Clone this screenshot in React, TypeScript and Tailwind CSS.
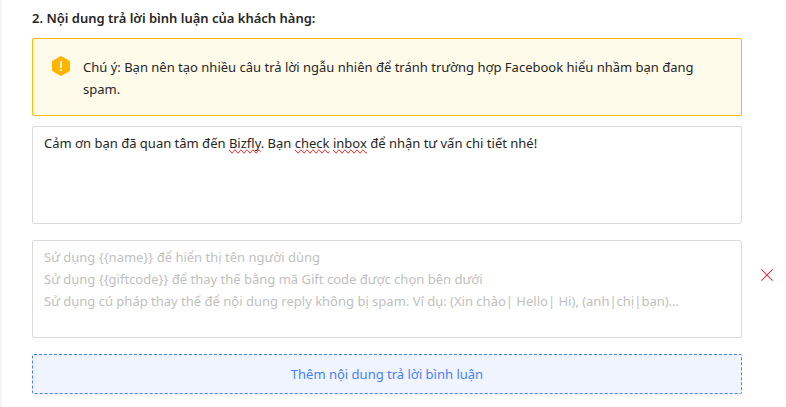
import { useState } from 'react'
import type { FC } from 'react'

interface ReplyFieldProps {
    id: string;
    label: string;
    value: string;
    misspelled?: string[];
    placeholder?: string;
    onChange: (value: string) => void;
    onRemove?: () => void;
}

const fieldText = "col-start-1 row-start-1 px-[11px] py-[5px] text-[13px] leading-[22px]";

const WarningIcon = () => (
    <svg viewBox="0 0 18 20" className="h-5 w-[18px] shrink-0" aria-hidden="true">
        <path
            d="M8 .4a2 2 0 0 1 2 0l7 4a2 2 0 0 1 1 1.7v7.8a2 2 0 0 1-1 1.7l-7 4a2 2 0 0 1-2 0l-7-4a2 2 0 0 1-1-1.7V6.1a2 2 0 0 1 1-1.7z"
            fill="#ffb400"
        />
        <path d="M9 5v7M9 13.2v1.8" stroke="#fff3cf" strokeWidth="2" />
    </svg>
)

const ReplyField: FC<ReplyFieldProps> = ({ id, label, value, misspelled = [], placeholder, onChange, onRemove }) => {
    const parts = misspelled.length > 0 ? value.split(new RegExp(`(${misspelled.join('|')})`)) : [];

    return (
        <div className="flex items-center">
            <div className="grid h-[98px] min-w-0 flex-1 rounded-xs border border-[#d9d9d9] bg-white">
                {/* Spelling marks, drawn under the transparent textarea */}
                {parts.length > 0 && (
                    <div aria-hidden="true" className={`${fieldText} whitespace-pre-wrap text-transparent`}>
                        {parts.map((part, index) => (
                            <span
                                key={index}
                                className={misspelled.includes(part) ? '[text-decoration-line:spelling-error]' : ''}
                            >
                                {part}
                            </span>
                        ))}
                    </div>
                )}
                <textarea
                    id={id}
                    aria-label={label}
                    value={value}
                    placeholder={placeholder}
                    spellCheck={false}
                    onChange={(e) => onChange(e.target.value)}
                    className={`${fieldText} resize-none bg-transparent text-[#262626] outline-none placeholder:text-[#bfbfbf]`}
                />
            </div>
            <div className="flex w-11 shrink-0 justify-center pl-1.5">
                {onRemove && (
                    <button type="button" aria-label="Xóa nội dung" onClick={onRemove} className="-mt-7 cursor-pointer p-1">
                        <svg viewBox="0 0 12 12" className="size-3" aria-hidden="true">
                            <path d="M.4.4l11.2 11.2M11.6.4L.4 11.6" stroke="#dc3545" strokeWidth="1.1" />
                        </svg>
                    </button>
                )}
            </div>
        </div>
    );
}

const App = () => {
    const [firstReply, setFirstReply] = useState('Cảm ơn bạn đã quan tâm đến Bizfly. Bạn check inbox để nhận tư vấn chi tiết nhé!');
    const [replies, setReplies] = useState<string[]>(['']);

    const updateReply = (index: number, value: string) => {
        setReplies(replies.map((reply, i) => (i === index ? value : reply)));
    }

    const placeholder = [
        'Sử dụng {{name}} để hiển thị tên người dùng',
        'Sử dụng {{giftcode}} để thay thế bằng mã Gift code được chọn bên dưới',
        'Sử dụng cú pháp thay thế để nội dung reply không bị spam. Ví dụ: (Xin chào| Hello| Hi), (anh|chị|bạn)...',
    ].join('\n');

    return (
        <main className="min-h-screen border-l-2 border-[#f5f5f5] bg-white pt-[7px] pl-[30px] font-['Noto_Sans',sans-serif] text-[13px] leading-[22px] text-[#262626]">
            <h2 className="font-semibold">2. Nội dung trả lời bình luận của khách hàng:</h2>

            <div role="note" className="mt-[9px] mr-11 flex gap-[13px] rounded-xs border border-[#ffb900] bg-[#fffbeb] pt-[17px] pr-10 pb-[15px] pl-[19px]">
                <WarningIcon />
                <p>Chú ý: Bạn nên tạo nhiều câu trả lời ngẫu nhiên để tránh trường hợp Facebook hiểu nhầm bạn đang spam.</p>
            </div>

            <div className="mt-2.5 flex flex-col gap-4">
                <ReplyField
                    id="reply-0"
                    label="Nội dung trả lời 1"
                    value={firstReply}
                    misspelled={['Bizfly', 'check', 'inbox']}
                    onChange={setFirstReply}
                />
                {replies.map((reply, index) => (
                    <ReplyField
                        key={index}
                        id={`reply-${index + 1}`}
                        label={`Nội dung trả lời ${index + 2}`}
                        value={reply}
                        placeholder={placeholder}
                        onChange={(value) => updateReply(index, value)}
                        onRemove={() => setReplies(replies.filter((_, i) => i !== index))}
                    />
                ))}
                <button
                    type="button"
                    onClick={() => setReplies([...replies, ''])}
                    className="mr-11 h-10 cursor-pointer rounded-xs border border-dashed border-[#4680ff] bg-[#f0f4ff] text-[#4680ff] shadow-[0_2px_0_rgba(0,0,0,0.04)]"
                >
                    Thêm nội dung trả lời bình luận
                </button>
            </div>
        </main>
    );
}

export default App
